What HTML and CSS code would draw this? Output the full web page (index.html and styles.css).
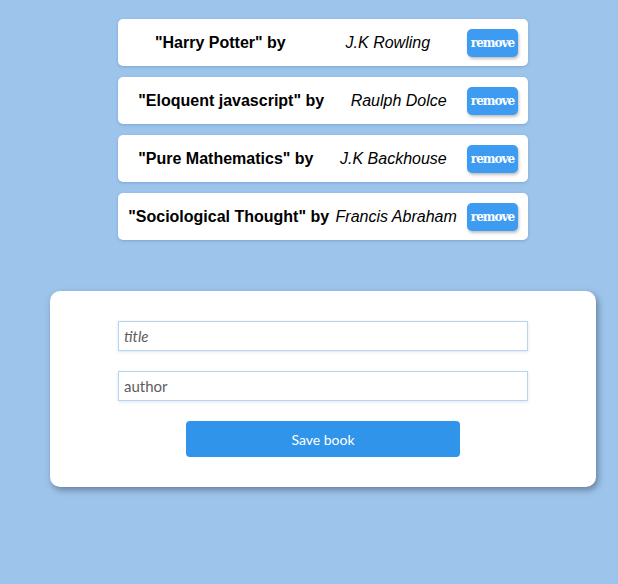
FILE: index.html
```html
<!DOCTYPE html>
<html>
<head>
<meta charset="utf-8">
<link rel="stylesheet" href="styles.css">
</head>
<body>
<div class="page">
  <ul class="books">
    <li class="book">
      <div class="info"><span class="title">"Harry Potter" by</span><span class="author">J.K Rowling</span></div>
      <button class="remove">remove</button>
    </li>
    <li class="book">
      <div class="info"><span class="title">"Eloquent javascript" by</span><span class="author">Raulph Dolce</span></div>
      <button class="remove">remove</button>
    </li>
    <li class="book">
      <div class="info"><span class="title">"Pure Mathematics" by</span><span class="author">J.K Backhouse</span></div>
      <button class="remove">remove</button>
    </li>
    <li class="book">
      <div class="info"><span class="title">"Sociological Thought" by</span><span class="author">Francis Abraham</span></div>
      <button class="remove">remove</button>
    </li>
  </ul>
  <form class="form">
    <input class="field field-title" type="text" placeholder="title">
    <input class="field" type="text" placeholder="author">
    <button class="save" type="button">Save book</button>
  </form>
</div>
</body>
</html>
```
FILE: styles.css
```css
html, body {
  margin: 0;
  padding: 0;
}
body {
  background: #9dc4eb;
  font-family: "Liberation Sans", Arial, sans-serif;
  width: 618px;
  height: 584px;
  overflow: hidden;
}
.page {
  padding-top: 19px;
}
.books {
  list-style: none;
  margin: 0 0 0 118px;
  padding: 0;
  width: 410px;
  display: flex;
  flex-direction: column;
  gap: 11px;
}
.book {
  background: #fff;
  border-radius: 5px;
  height: 47px;
  box-sizing: border-box;
  display: flex;
  align-items: center;
  padding: 0 10px 0 7px;
  gap: 7px;
  box-shadow: 0 1px 3px rgba(70, 110, 170, 0.35);
}
.info {
  flex: 1;
  display: flex;
  justify-content: space-around;
  align-items: center;
  font-size: 16px;
  color: #000;
  white-space: nowrap;
}
.title {
  font-weight: bold;
}
.author {
  font-style: italic;
}
.remove {
  width: 51px;
  height: 28px;
  border: none;
  border-radius: 5px;
  background: #3d9cf1;
  color: #fff;
  font-family: "DejaVu Serif", serif;
  font-weight: bold;
  font-size: 12px;
  letter-spacing: -1px;
  padding: 0;
  box-shadow: 1px 2px 3px rgba(0, 0, 0, 0.25);
}
.form {
  margin: 51px 0 0 50px;
  width: 546px;
  height: 196px;
  box-sizing: border-box;
  background: #fff;
  border-radius: 10px;
  box-shadow: 2px 3px 6px rgba(60, 70, 90, 0.55);
  display: flex;
  flex-direction: column;
  align-items: center;
  padding-top: 30px;
}
.field {
  width: 410px;
  height: 30px;
  box-sizing: border-box;
  border: 1px solid #b9d4ee;
  box-shadow: 0 1px 3px rgba(120, 150, 190, 0.25);
  padding: 0 5px;
  font-family: Lato, "Open Sans", sans-serif;
  font-size: 15px;
  color: #555;
  margin-bottom: 20px;
  outline: none;
}
.field::placeholder {
  color: #5e5e5e;
}
.field-title::placeholder {
  font-style: italic;
}
.save {
  width: 274px;
  height: 36px;
  border: none;
  border-radius: 4px;
  background: #3194eb;
  color: #fff;
  font-family: Lato, "Open Sans", sans-serif;
  font-weight: 400;
  font-size: 14px;
  padding: 0;
}
```
